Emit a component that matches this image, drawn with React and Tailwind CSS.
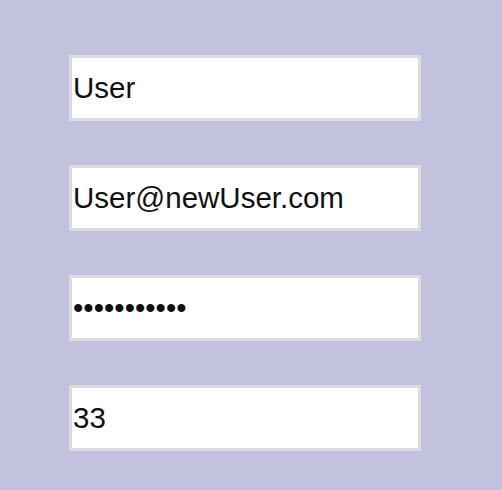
import { useState } from 'react';

// Simple stacked form of four text fields on a lavender page
const fields = [
    { type: 'text', value: 'User' },
    { type: 'email', value: 'User@newUser.com' },
    { type: 'password', value: 'secretpass1' },
    { type: 'text', value: '33' },
];

export default function App() {
    const [values, setValues] = useState(fields.map((f) => f.value));

    return (
        <div className="w-[502px] h-[490px] bg-[#c3c2de] pl-[69px] pt-[55px] flex flex-col gap-[44px] font-['Liberation_Sans',Arial,sans-serif]">
            {fields.map((f, idx) => (
                <input
                    key={idx}
                    type={f.type}
                    value={values[idx]}
                    onChange={(e) => {
                        const next = [...values];
                        next[idx] = e.target.value;
                        setValues(next);
                    }}
                    className="w-[352px] h-[66px] bg-white border-[3px] border-[#dcdce0] pl-[1px] text-[29.5px] text-[#111] outline-none"
                />
            ))}
        </div>
    );
}
